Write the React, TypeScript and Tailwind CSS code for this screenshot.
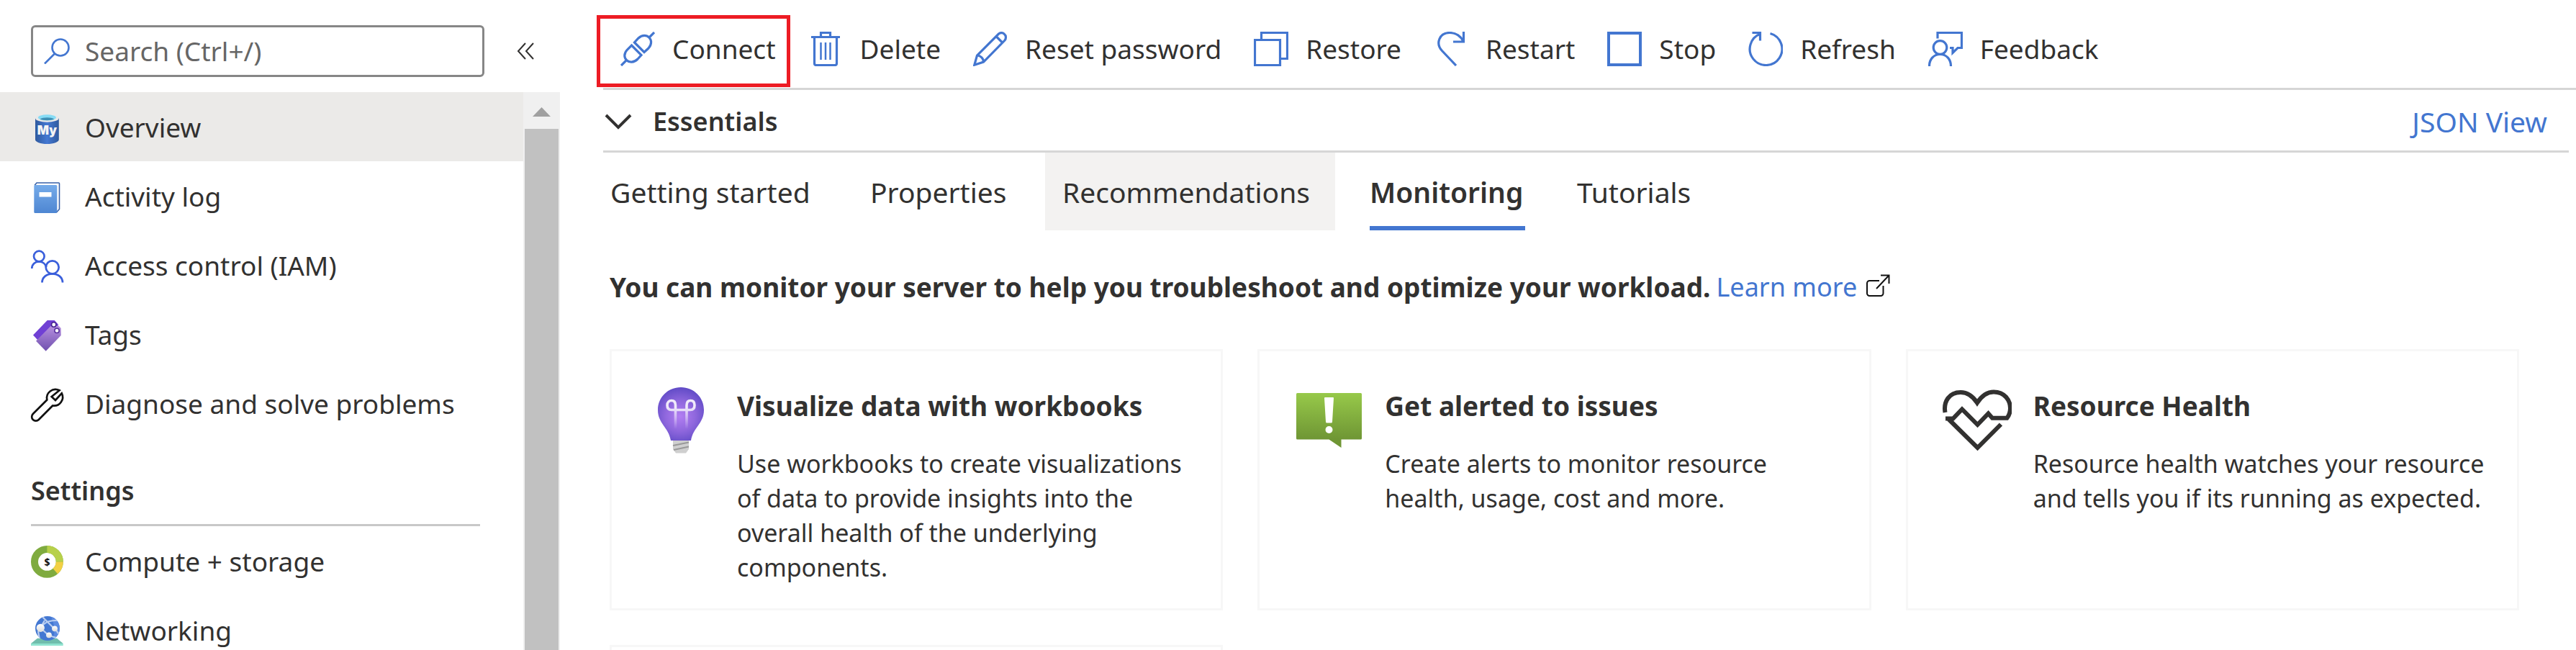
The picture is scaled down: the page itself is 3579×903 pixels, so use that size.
import type { ReactNode } from "react";

const BLUE = "#4376d0";

function SideIcon({ children }: { children: ReactNode }) {
  return (
    <svg viewBox="0 0 46 46" className="size-[46px] shrink-0 overflow-visible" fill="none" aria-hidden="true">
      {children}
    </svg>
  );
}

function ToolIcon({ children }: { children: ReactNode }) {
  return (
    <svg viewBox="0 0 48 48" className="size-12 shrink-0" fill="none" stroke={BLUE} strokeWidth={3.2} aria-hidden="true">
      {children}
    </svg>
  );
}

function CardIcon({ children }: { children: ReactNode }) {
  return (
    <svg viewBox="0 0 96 96" className="size-24 shrink-0" fill="none" aria-hidden="true">
      {children}
    </svg>
  );
}

const MySqlIcon = () => (
  <SideIcon>
    <defs>
      <linearGradient id="my-body" x1="6" x2="39" y1="0" y2="0" gradientUnits="userSpaceOnUse">
        <stop offset="0" stopColor="#2f5a9e" />
        <stop offset=".5" stopColor="#4478d2" />
        <stop offset="1" stopColor="#2f5a9e" />
      </linearGradient>
    </defs>
    <path d="M6 10v30c0 3.3 7.3 6 16.4 6s16.4-2.700 16.400-6V10z" fill="url(#my-body)" />
    <ellipse cx="22.400" cy="10" rx="16.400" ry="5.800" fill="#e8e8e8" />
    <ellipse cx="22.400" cy="9.300" rx="12.500" ry="4" fill="#87dcf5" />
    <path d="M12.500 11.600c2-1.500 5.700-2.300 9.900-2.300s7.900.8 9.900 2.300c-2.200 1-5.800 1.700-9.900 1.700s-7.700-.7-9.900-1.700z" fill="#3f8fb4" />
    <text x="22.400" y="33" textAnchor="middle" fontFamily="Inter, sans-serif" fontWeight="900" fontSize="17" fill="#f4f4f4">
      My
    </text>
  </SideIcon>
);

const LogIcon = () => (
  <SideIcon>
    <defs>
      <linearGradient id="log-body" x1="0" x2="0" y1="6" y2="46" gradientUnits="userSpaceOnUse">
        <stop offset="0" stopColor="#76acea" />
        <stop offset="1" stopColor="#4e86d2" />
      </linearGradient>
    </defs>
    <path d="M5 7.500 8 4h30.500a1 1 0 0 1 1 1v35.500L35.500 45" fill="#fff" stroke="#3a62a8" strokeWidth="1.600" />
    <rect x="4.300" y="7" width="32" height="39" rx="1.500" fill="url(#log-body)" />
    <rect x="11.500" y="17" width="17" height="6.500" fill="#fff" />
  </SideIcon>
);

const PeopleIcon = () => (
  <SideIcon>
    <g stroke="#3a5fdb" strokeWidth="2.700">
      <circle cx="11.300" cy="10" r="7.300" />
      <path d="M1.300 27C1.300 21 5.800 17.400 11.300 17.400c4.700 0 8.800 3 10 7.600" />
      <circle cx="29.700" cy="25.300" r="9" />
      <path d="M15.500 46.500c0-7.500 6.500-12.200 14.200-12.200S44 39 44 46.500" />
    </g>
  </SideIcon>
);

const TagsIcon = () => (
  <SideIcon>
    <defs>
      <linearGradient id="tag-front" x1="0" x2="0" y1="10" y2="46" gradientUnits="userSpaceOnUse">
        <stop offset="0" stopColor="#b791e0" />
        <stop offset="1" stopColor="#6f4fae" />
      </linearGradient>
    </defs>
    <path d="M3 23.500 22.700 3h10l5 5.500v9L9 30z" fill="#7040d4" />
    <path d="M7 31.700 27.700 10.700h11l3 3.300v10L20.700 45.700z" fill="url(#tag-front)" />
    <circle cx="31.700" cy="9" r="3.200" fill="#fff" stroke="#46258f" strokeWidth="1.600" />
    <circle cx="36" cy="17.300" r="3.200" fill="#fff" stroke="#5b35a0" strokeWidth="1.600" />
  </SideIcon>
);

const WrenchIcon = () => (
  <SideIcon>
    <path
      d="M39.500 4.300A12 12 0 0 0 22.300 17.500L2.800 37a5.600 5.600 0 0 0 8 8L30.200 25.500A12 12 0 0 0 42.800 8.300L34 18l-5.300-5z"
      stroke="#111"
      strokeWidth="2.700"
    />
  </SideIcon>
);

const CostIcon = () => (
  <SideIcon>
    <g strokeWidth="10">
      <circle cx="22.400" cy="23.400" r="17.400" stroke="#7fab3f" />
      <path d="M22.400 6a17.400 17.400 0 0 1 17.400 17.400" stroke="#b7d04a" />
      <path d="M39.800 23.400a17.400 17.400 0 0 1-6 13.100" stroke="#f2d044" />
    </g>
    <text x="22.400" y="28.500" textAnchor="middle" fontFamily="Open Sans, sans-serif" fontWeight="700" fontSize="14" fill="#111">
      $
    </text>
  </SideIcon>
);

const NetworkIcon = () => (
  <SideIcon>
    <defs>
      <clipPath id="globe">
        <circle cx="23" cy="20" r="17" />
      </clipPath>
      <linearGradient id="node" x1="0" x2="0" y1="0" y2="1">
        <stop offset="0" stopColor="#fff" />
        <stop offset="1" stopColor="#dcdcdc" />
      </linearGradient>
    </defs>
    <path d="M9 33.700h27L44.700 41H0z" fill="#70bdac" />
    <path d="M0 41h44.700v3H0z" fill="#8fe3cf" />
    <circle cx="23" cy="20" r="17" fill="#4478d2" />
    <g clipPath="url(#globe)">
      <path d="M40 6v34H28c6-8 6-24 0-36z" fill="#5c8be0" />
      <g stroke="#b9cdf0" strokeWidth="2.200">
        <path d="M13 19C20 10 28 8 42 9M15 3l18 18M19 9l-6 10 12 11 14 4M10 24l2 12M33 20l6 8" />
      </g>
    </g>
    <circle cx="13.300" cy="19.300" r="5.600" fill="url(#node)" />
    <circle cx="33" cy="20.300" r="3.900" fill="url(#node)" />
    <circle cx="25" cy="29.300" r="3.900" fill="url(#node)" />
  </SideIcon>
);

const tools: { label: string; icon: ReactNode; highlighted?: boolean }[] = [
  {
    label: "Connect",
    highlighted: true,
    icon: (
      <ToolIcon>
        <path d="M47 1l-8 8M1 47l8-8M19.500 15 33 28.500l6-5.500C49 12 36-1 25 9zM15.500 19 29 32.500 24 38C13 49-1 36 9.500 25z" />
      </ToolIcon>
    ),
  },
  {
    label: "Delete",
    icon: (
      <ToolIcon>
        <path d="M4 7.500h40M17.500 7V1.500h13V7M8.500 8v36c0 1.500 1 2.500 2.500 2.500h26c1.500 0 2.500-1 2.500-2.500V8" />
        <path d="M17.500 15v24M24 15v24M30.500 15v24" strokeWidth="2.500" />
      </ToolIcon>
    ),
  },
  {
    label: "Reset password",
    icon: (
      <ToolIcon>
        <path d="M1.800 46.200 5.500 33 35.500 3c2.500-2 6-2 8 .5 2.500 2 2.500 6 .5 8.500L14.500 42zM32 6.500l9 9M5.500 33c4.500 0 9 4 9 9" />
      </ToolIcon>
    ),
  },
  {
    label: "Restore",
    icon: (
      <ToolIcon>
        <path d="M1.500 11.500h35v35h-35zM10.500 11V1.500h36v36H37" />
      </ToolIcon>
    ),
  },
  {
    label: "Restart",
    icon: (
      <ToolIcon>
        <path d="M31 47 11.500 26.500C2 16 8 1.500 22 1.500c9 0 16 5 19 12M41.500 0v14H27" />
      </ToolIcon>
    ),
  },
  {
    label: "Stop",
    icon: (
      <ToolIcon>
        <path d="M2 2h44v44H2z" strokeWidth="4" />
      </ToolIcon>
    ),
  },
  {
    label: "Refresh",
    icon: (
      <ToolIcon>
        <path d="M17 3A22.400 22.400 0 1 0 30.500 2.500M5.500 1.500H16.500V12.500" />
      </ToolIcon>
    ),
  },
  {
    label: "Feedback",
    icon: (
      <ToolIcon>
        <path d="M13 9.500V1.500h33.500v21H41l-7 7v-7h-4M1.500 48c0-9.500 6-16.500 15-16.500s15 7 15 16.500" />
        <circle cx="16.500" cy="22" r="9.300" />
      </ToolIcon>
    ),
  },
];

const BulbIcon = () => (
  <CardIcon>
    <defs>
      <radialGradient id="bulb" cx="47" cy="42" r="42" gradientUnits="userSpaceOnUse">
        <stop offset="0" stopColor="#b27ef2" />
        <stop offset=".5" stopColor="#8f67dd" />
        <stop offset="1" stopColor="#5b48c4" />
      </radialGradient>
      <linearGradient id="filament" x1="0" x2="0" y1="30" y2="60" gradientUnits="userSpaceOnUse">
        <stop offset="0" stopColor="#f0eafa" />
        <stop offset="1" stopColor="#f0eafa" stopOpacity="0" />
      </linearGradient>
    </defs>
    <path d="M48 2C30 2 16 16 16 33.500c0 19 15 24 18 42.500h28c3-18.500 18-23.500 18-42.500C80 16 66 2 48 2z" fill="url(#bulb)" />
    <path
      d="M40.500 60V27c0-4-2-6.500-5.500-6.500S29 23 29 27s2 6.500 6 6.500h26c4 0 6-2.500 6-6.500s-2-6.500-5.500-6.500-5.500 2.500-5.500 6.500v33"
      stroke="url(#filament)"
      strokeWidth="3.600"
    />
    <path d="M37 76h22v12l-4 5.500H41L37 88z" fill="#cfcfcf" />
    <path d="m37 83 22-4.500M38 89l21-4.500" stroke="#999" strokeWidth="2" />
  </CardIcon>
);

const AlertIcon = () => (
  <CardIcon>
    <defs>
      <linearGradient id="alert" x1="0" x2="0" y1="10" y2="74" gradientUnits="userSpaceOnUse">
        <stop offset="0" stopColor="#97c94a" />
        <stop offset="1" stopColor="#6f9634" />
      </linearGradient>
    </defs>
    <path d="M4.500 10h88A1.500 1.500 0 0 1 94 11.500V73a1.500 1.500 0 0 1-1.500 1.500H65.500V86L48.500 74.500h-44A1.500 1.500 0 0 1 3 73V11.500A1.500 1.500 0 0 1 4.500 10z" fill="url(#alert)" />
    <path d="M43 16h11a1 1 0 0 1 1 1l-2 33a1.500 1.500 0 0 1-1.500 1.500h-6A1.500 1.500 0 0 1 44 50L42 17a1 1 0 0 1 1-1z" fill="#fff" />
    <circle cx="48.500" cy="61" r="5" fill="#fff" />
  </CardIcon>
);

const HeartIcon = () => (
  <CardIcon>
    <path
      d="M3.500 37C1 22 9 9 25 9c11 0 18 7 23 14.500C53 16 60 8.500 71 8.500 86 8.500 94 20 94 31c0 6-2 10.500-4.500 13.700H69l-5.500-6.200-15 15.500L27 32.500 14.500 45.500H4M8.500 46.500l40 39.500L81 53.500"
      stroke="#323130"
      strokeWidth="6"
    />
  </CardIcon>
);

const mainNav = [
  { label: "Overview", icon: <MySqlIcon />, active: true },
  { label: "Activity log", icon: <LogIcon /> },
  { label: "Access control (IAM)", icon: <PeopleIcon /> },
  { label: "Tags", icon: <TagsIcon /> },
  { label: "Diagnose and solve problems", icon: <WrenchIcon /> },
];

const settingsNav = [
  { label: "Compute + storage", icon: <CostIcon /> },
  { label: "Networking", icon: <NetworkIcon /> },
];

const cards = [
  {
    title: "Visualize data with workbooks",
    body: "Use workbooks to create visualizations of data to provide insights into the overall health of the underlying components.",
    icon: <BulbIcon />,
  },
  { title: "Get alerted to issues", body: "Create alerts to monitor resource health, usage, cost and more.", icon: <AlertIcon /> },
  {
    title: "Resource Health",
    body: "Resource health watches your resource and tells you if its running as expected.",
    icon: <HeartIcon />,
  },
];

function NavItem({ label, icon, active }: { label: string; icon: ReactNode; active?: boolean }) {
  return (
    <li>
      <a
        href="#"
        aria-current={active ? "page" : undefined}
        className={`flex h-24 items-center gap-[29px] pt-0.5 pl-[43px] ${active ? "bg-[#ebeae8]" : ""}`}
      >
        {icon}
        {label}
      </a>
    </li>
  );
}

function Sidebar() {
  return (
    <aside className="flex w-[778px] shrink-0 flex-col">
      <div className="flex h-32 shrink-0 items-center gap-[45px] pt-[14px] pl-[43px]">
        <label className="flex h-[72px] w-[630px] items-center gap-[21px] rounded-md border-3 border-[#868686] pl-[15px]">
          <svg viewBox="0 0 36 36" className="size-9 shrink-0" fill="none" stroke={BLUE} strokeWidth="2.600" aria-hidden="true">
            <circle cx="23" cy="13" r="11.500" />
            <path d="M15 21.500 1 35.500" />
          </svg>
          <input
            type="search"
            aria-label="Search"
            placeholder="Search (Ctrl+/)"
            className="min-w-0 flex-1 bg-transparent outline-none placeholder:text-[#666]"
          />
        </label>
        <button type="button" aria-label="Collapse menu">
          <svg viewBox="0 0 24 24" className="size-6" fill="none" stroke="#323130" strokeWidth="2" aria-hidden="true">
            <path d="M12 1 2 12l10 11M23 1 13 12l10 11" />
          </svg>
        </button>
      </div>
      <div className="flex min-h-0 flex-1">
        <nav className="min-w-0 flex-1 overflow-hidden">
          <ul>
            {mainNav.map((item) => (
              <NavItem key={item.label} {...item} />
            ))}
          </ul>
          <h2 className="mr-[60px] ml-[43px] flex h-[123px] items-center border-b-3 border-[#c8c8c8] pt-7 text-[36px] font-semibold">
            Settings
          </h2>
          <ul>
            {settingsNav.map((item) => (
              <NavItem key={item.label} {...item} />
            ))}
          </ul>
        </nav>
        <div className="flex w-[51px] shrink-0 flex-col items-center bg-[#f0f0f0]" aria-hidden="true">
          <div className="flex h-[51px] items-center pt-1">
            <svg viewBox="0 0 25 13" className="h-[13px] w-[25px]">
              <path d="M12.500 0 25 13H0z" fill="#a0a0a0" />
            </svg>
          </div>
          <div className="w-[47px] flex-1 bg-[#c1c1c1]" />
        </div>
      </div>
    </aside>
  );
}

const tabs = [
  { label: "Getting started", width: "w-[337px]" },
  { label: "Properties", width: "w-[243px]" },
  { label: "Recommendations", width: "w-[403px]", hovered: true },
  { label: "Monitoring", width: "w-[264px]", selected: true },
  { label: "Tutorials", width: "w-[220px]" },
];

export default function App() {
  return (
    <div className="flex h-screen overflow-hidden bg-white font-['Noto_Sans','Open_Sans',sans-serif] text-[37px] leading-[48px] text-[#323130]">
      <Sidebar />
      <main className="min-w-0 flex-1 pl-[60px]">
        <div className="flex h-[125px] gap-[45px] border-b-3 border-[#d6d6d6] pt-5 pl-6" role="toolbar" aria-label="Server actions">
          {tools.map((tool) => (
            <button key={tool.label} type="button" className="relative flex h-24 items-center gap-6 whitespace-nowrap">
              {tool.icon}
              {tool.label}
              {tool.highlighted && (
                <span className="absolute top-px -right-5 -bottom-[5px] -left-[33px] border-5 border-[#ed1c24]" />
              )}
            </button>
          ))}
        </div>
        <div className="mr-[10px] flex h-[87px] items-center justify-between border-b-3 border-[#d6d6d6] pt-1 pr-[30px]">
          <button type="button" aria-expanded="false" className="flex items-center gap-[29px] pl-[2px] text-[36px] font-semibold">
            <svg viewBox="0 0 38 24" className="h-6 w-[38px]" fill="none" stroke="#323130" strokeWidth="4" aria-hidden="true">
              <path d="m2 3 17 17L36 3" />
            </svg>
            Essentials
          </button>
          <a href="#" className="text-[39px] text-[#4376d0]">
            JSON View
          </a>
        </div>
        <div role="tablist" className="-ml-[14px] flex h-[108px] gap-6 text-[39px]">
          {tabs.map((tab) => (
            <button
              key={tab.label}
              type="button"
              role="tab"
              aria-selected={tab.selected ?? false}
              className={`flex flex-col px-6 whitespace-nowrap ${tab.width} ${tab.hovered ? "bg-[#f3f2f1]" : ""} ${
                tab.selected ? "font-semibold" : ""
              }`}
            >
              <span className="flex h-[102px] items-center pt-2">{tab.label}</span>
              {tab.selected && <span className="h-[6px] self-stretch bg-[#4376d0]" />}
            </button>
          ))}
        </div>
        <p className="flex items-center pt-[55px] pl-[9px] whitespace-nowrap">
          <strong className="font-bold">You can monitor your server to help you troubleshoot and optimize your workload.</strong>
          <a href="#" className="flex items-center gap-3 pl-2 text-[36px] text-[#4376d0]">
            Learn more
            <svg viewBox="0 0 34 32" className="mb-1 h-8 w-[34px]" fill="none" stroke="#111" strokeWidth="2" aria-hidden="true">
              <path d="M19 9H5.500A3.500 3.500 0 0 0 2 12.500v14A3.500 3.500 0 0 0 5.500 30H21a3.500 3.500 0 0 0 3.500-3.500V16M15 20 32.500 1.500M21 1.500h11.500V13" />
            </svg>
          </a>
        </p>
        <div className="grid grid-cols-3 gap-12 pt-[62px] pr-[79px] pl-[9px]">
          {cards.map((card) => (
            <section key={card.title} className="flex h-[363px] gap-[30px] border-3 border-[#f7f7f7] pt-12 pr-8 pl-12">
              {card.icon}
              <div className="pt-1">
                <h3 className="font-bold">{card.title}</h3>
                <p className="pt-8 text-[34px] leading-[48px]">{card.body}</p>
              </div>
            </section>
          ))}
          <section className="h-[363px] border-3 border-[#f7f7f7]" />
        </div>
      </main>
    </div>
  );
}
